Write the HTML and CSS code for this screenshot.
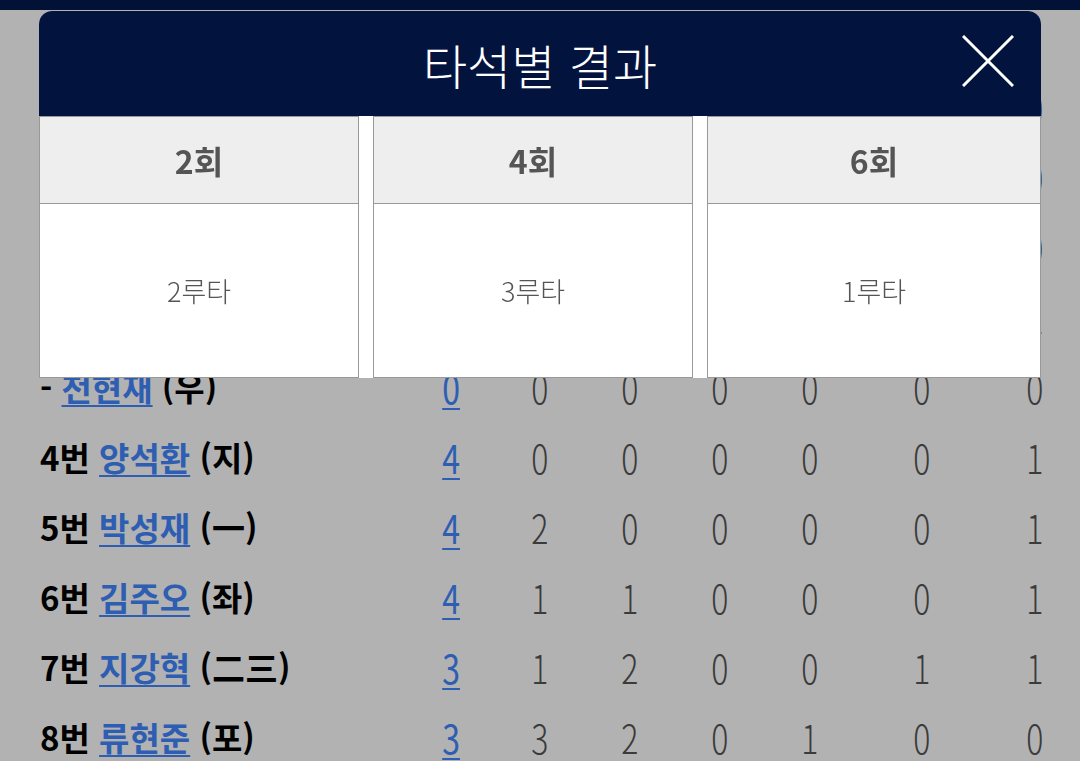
FILE: index.html
```html
<!DOCTYPE html>
<html lang="ko">
<head>
  <meta charset="UTF-8" />
  <meta name="viewport" content="width=device-width, initial-scale=1.0"/>
  <title>라인업</title>
  <link rel="stylesheet" href="styles.css">
</head>
<body>

<div class="topbar"></div>

<div class="lineup">
  <div class="row">
    <div class="player">1번</div>
    <div class="num ab"><a href="#">4</a></div>
    <div class="num"><span>1</span></div><div class="num"><span>0</span></div><div class="num"><span>0</span></div>
    <div class="num"><span>0</span></div><div class="num"><span>0</span></div><div class="num"><span>0</span></div>
  </div>
  <div class="row">
    <div class="player">2번</div>
    <div class="num ab"><a href="#">4</a></div>
    <div class="num"><span>0</span></div><div class="num"><span>0</span></div><div class="num"><span>0</span></div>
    <div class="num"><span>0</span></div><div class="num"><span>0</span></div><div class="num"><span>0</span></div>
  </div>
  <div class="row">
    <div class="player">3번</div>
    <div class="num ab"><a href="#">3</a></div>
    <div class="num"><span>0</span></div><div class="num"><span>0</span></div><div class="num"><span>0</span></div>
    <div class="num"><span>0</span></div><div class="num"><span>0</span></div><div class="num"><span>0</span></div>
  </div>
  <div class="row">
    <div class="player">3번</div>
    <div class="num ab"><a href="#">1</a></div>
    <div class="num"><span>0</span></div><div class="num"><span>0</span></div><div class="num"><span>0</span></div>
    <div class="num"><span>0</span></div><div class="num"><span>0</span></div><div class="num"><span>1</span></div>
  </div>
  <div class="row">
    <div class="player">- <a href="#">천현재</a> (우)</div>
    <div class="num ab"><a href="#">0</a></div>
    <div class="num"><span>0</span></div><div class="num"><span>0</span></div><div class="num"><span>0</span></div>
    <div class="num"><span>0</span></div><div class="num"><span>0</span></div><div class="num"><span>0</span></div>
  </div>
  <div class="row">
    <div class="player">4번 <a href="#">양석환</a> (지)</div>
    <div class="num ab"><a href="#">4</a></div>
    <div class="num"><span>0</span></div><div class="num"><span>0</span></div><div class="num"><span>0</span></div>
    <div class="num"><span>0</span></div><div class="num"><span>0</span></div><div class="num"><span>1</span></div>
  </div>
  <div class="row">
    <div class="player">5번 <a href="#">박성재</a> (一)</div>
    <div class="num ab"><a href="#">4</a></div>
    <div class="num"><span>2</span></div><div class="num"><span>0</span></div><div class="num"><span>0</span></div>
    <div class="num"><span>0</span></div><div class="num"><span>0</span></div><div class="num"><span>1</span></div>
  </div>
  <div class="row">
    <div class="player">6번 <a href="#">김주오</a> (좌)</div>
    <div class="num ab"><a href="#">4</a></div>
    <div class="num"><span>1</span></div><div class="num"><span>1</span></div><div class="num"><span>0</span></div>
    <div class="num"><span>0</span></div><div class="num"><span>0</span></div><div class="num"><span>1</span></div>
  </div>
  <div class="row">
    <div class="player">7번 <a href="#">지강혁</a> (二三)</div>
    <div class="num ab"><a href="#">3</a></div>
    <div class="num"><span>1</span></div><div class="num"><span>2</span></div><div class="num"><span>0</span></div>
    <div class="num"><span>0</span></div><div class="num"><span>1</span></div><div class="num"><span>1</span></div>
  </div>
  <div class="row">
    <div class="player">8번 <a href="#">류현준</a> (포)</div>
    <div class="num ab"><a href="#">3</a></div>
    <div class="num"><span>3</span></div><div class="num"><span>2</span></div><div class="num"><span>0</span></div>
    <div class="num"><span>1</span></div><div class="num"><span>0</span></div><div class="num"><span>0</span></div>
  </div>
</div>

<div class="dim"></div>

<div class="modal">
  <div class="modal-head">
    <h2>타석별 결과</h2>
    <button class="close" type="button">
      <svg width="52" height="52" viewBox="0 0 52 52">
        <path d="M1 1 L51 51 M51 1 L1 51" stroke="#fff" stroke-width="3" fill="none"/>
      </svg>
    </button>
  </div>
  <div class="modal-body">
    <div class="at-bat">
      <div class="inning">2회</div>
      <div class="result">2루타</div>
    </div>
    <div class="at-bat">
      <div class="inning">4회</div>
      <div class="result">3루타</div>
    </div>
    <div class="at-bat">
      <div class="inning">6회</div>
      <div class="result">1루타</div>
    </div>
  </div>
</div>

</body>
</html>
```

FILE: styles.css
```css
body {
  margin: 0;
  background: #fff;
  font-family: "Noto Sans CJK KR", "Noto Sans", sans-serif;
  overflow: hidden;
}
.topbar {
  height: 10px;
  background: #031a50;
}
.lineup {
  padding: 62px 0 0 40px;
}
.row {
  display: grid;
  grid-template-columns: 370px 82px 96px 84px 96px 84px 140px 86px;
  height: 70px;
  align-items: center;
}
.player {
  font-size: 33px;
  font-weight: 700;
  color: #000;
  white-space: nowrap;
}
.player a {
  color: #4187ff;
  text-decoration: underline;
  text-decoration-thickness: 2px;
  text-underline-offset: 4px;
}
.num {
  text-align: center;
  font-size: 40px;
  font-weight: 300;
  color: #555;
}
.num span,
.num a {
  display: inline-block;
  transform: scaleX(0.8);
}
.ab a {
  color: #4187ff;
  font-weight: 400;
  text-decoration: underline;
  text-decoration-thickness: 2px;
  text-underline-offset: 4px;
}

/* dark layer behind the popup */
.dim {
  position: fixed;
  inset: 0;
  background: rgba(0,0,0,0.3);
}

.modal {
  position: absolute;
  top: 11px;
  left: 39px;
  width: 1002px;
  background: #fff;
  border-radius: 13px 13px 0 0;
  overflow: hidden;
}
.modal-head {
  position: relative;
  height: 105px;
  background: #02133e;
  display: flex;
  align-items: center;
  justify-content: center;
}
.modal-head h2 {
  margin: 0;
  color: #fff;
  font-size: 48px;
  font-weight: 300;
  letter-spacing: 0;
}
.close {
  position: absolute;
  top: 24px;
  right: 27px;
  padding: 0;
  border: none;
  background: none;
  line-height: 0;
  cursor: pointer;
}
.modal-body {
  display: grid;
  grid-template-columns: 320px 320px 1fr;
  gap: 14px;
}
.at-bat {
  border: 1px solid #999;
  text-align: center;
  color: #555;
}
.inning {
  height: 86px;
  line-height: 86px;
  background: #eee;
  border-bottom: 1px solid #999;
  font-size: 32px;
  font-weight: 700;
}
.result {
  height: 173px;
  line-height: 173px;
  font-size: 27px;
  font-weight: 300;
}
```
